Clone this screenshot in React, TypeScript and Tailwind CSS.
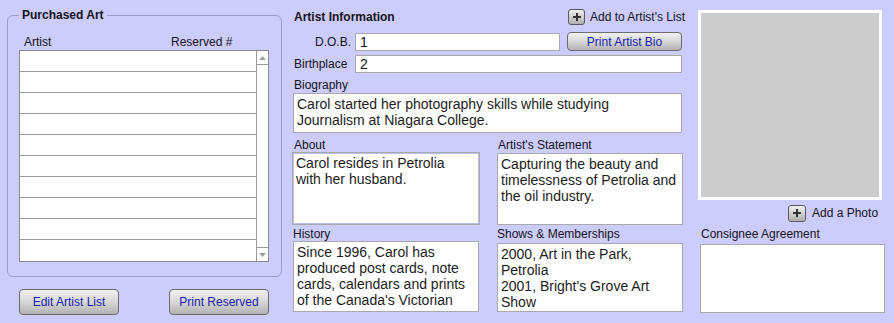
import React from 'react';

// --- small pieces ---
const GrayButton = ({ label, className = '' }: { label: string; className?: string }) => (
    <div
        className={`flex items-center justify-center rounded-[4px] border border-[#6b6b6b] bg-gradient-to-b from-[#f2f2f2] via-[#d6d6d6] to-[#b3b3b3] text-[12px] text-[#1b1bb0] ${className}`}
    >
        {label}
    </div>
);

const PlusButton = ({ size = 17 }: { size?: number }) => (
    <div
        className="flex items-center justify-center rounded-[3px] border border-[#5a5a5a] bg-gradient-to-b from-[#f0f0f0] to-[#b0b0b0]"
        style={{ width: size, height: size - 1 }}
    >
        <svg width="10" height="10" viewBox="0 0 10 10">
            <path d="M5 1V9M1 5H9" stroke="#333" strokeWidth="2" />
        </svg>
    </div>
);

const Box = ({ children, className = '' }: { children?: React.ReactNode; className?: string }) => (
    <div className={`bg-white border border-[#a9a9a9] pl-[3px] pt-[2px] text-[14px] leading-[16px] text-[#1c1c1c] overflow-hidden ${className}`}>
        {children}
    </div>
);

export default function App() {
    const rows = Array.from({ length: 10 });

    return (
        <div className="w-[894px] h-[323px] bg-[#ccccff] flex text-[12px] leading-[14px] text-[#141414] font-['Liberation_Sans',Arial,sans-serif] overflow-hidden">
            {/* Purchased Art */}
            <div className="ml-[7px] w-[275px] flex flex-col">
                <fieldset className="mt-[8px] h-[269px] border border-[#9c9cc0] rounded-[6px] px-[11px]">
                    <legend className="px-[3px] font-bold leading-[14px]">Purchased Art</legend>
                    <div className="mt-[13px] flex pl-[5px]">
                        <span className="w-[147px]">Artist</span>
                        <span>Reserved #</span>
                    </div>
                    <div className="mt-[1px] w-[250px] h-[212px] border border-[#8a8a8a] bg-white flex">
                        <div className="flex-1 flex flex-col">
                            {rows.map((_, i) => (
                                <div key={i} className={`h-[21px] ${i < 9 ? 'border-b border-[#9a9a9a]' : ''}`}></div>
                            ))}
                        </div>
                        <div className="w-[12px] border-l border-[#9a9a9a] flex flex-col justify-between">
                            <div className="h-[14px] border-b border-[#9a9a9a] flex items-center justify-center">
                                <svg width="7" height="4" viewBox="0 0 7 4"><path d="M0 4L3.5 0L7 4Z" fill="#a0a0a0" /></svg>
                            </div>
                            <div className="h-[14px] border-t border-[#9a9a9a] flex items-center justify-center">
                                <svg width="7" height="4" viewBox="0 0 7 4"><path d="M0 0L3.5 4L7 0Z" fill="#a0a0a0" /></svg>
                            </div>
                        </div>
                    </div>
                </fieldset>
                <div className="mt-[12px] flex gap-[50px] pl-[12px]">
                    <GrayButton label="Edit Artist List" className="w-[100px] h-[26px]" />
                    <GrayButton label="Print Reserved" className="w-[100px] h-[26px]" />
                </div>
            </div>

            {/* Artist Information */}
            <div className="ml-[10px] w-[394px] flex flex-col">
                <div className="mt-[8px] h-[18px] flex items-center">
                    <span className="pl-[2px] w-[276px] font-bold">Artist Information</span>
                    <PlusButton />
                    <span className="ml-[5px]">Add to Artist's List</span>
                </div>
                <div className="mt-[6px] h-[19px] flex items-center">
                    <span className="w-[59px] text-right">D.O.B.</span>
                    <div className="ml-[4px] w-[205px] h-[18px] bg-white border border-[#a9a9a9] pl-[4px] text-[14px] leading-[16px]">1</div>
                    <GrayButton label="Print Artist Bio" className="ml-[7px] w-[115px] h-[19px]" />
                </div>
                <div className="mt-[4px] h-[18px] flex items-center">
                    <span className="pl-[2px] w-[63px]">Birthplace</span>
                    <div className="w-[327px] h-[18px] bg-white border border-[#a9a9a9] pl-[4px] text-[14px] leading-[16px]">2</div>
                </div>
                <div className="mt-[5px] pl-[2px]">Biography</div>
                <Box className="mt-[1px] ml-[1px] w-[389px] h-[40px] pr-[40px]">
                    Carol started her photography skills while studying Journalism at Niagara College.
                </Box>
                <div className="mt-[5px] flex">
                    <div className="w-[188px] flex flex-col">
                        <div className="pl-[2px]">About</div>
                        <Box className="w-[188px] h-[73px] pr-[12px] border-[#8e9ae6] shadow-[inset_0_0_0_1px_#b9c0f0]">
                            Carol resides in Petrolia with her husband.
                        </Box>
                        <div className="mt-[2px] pl-[1px]">History</div>
                        <Box className="ml-[1px] w-[186px] h-[71px]">
                            Since 1996, Carol has produced post cards, note cards, calendars and prints of the Canada's Victorian
                        </Box>
                    </div>
                    <div className="ml-[17px] w-[186px] flex flex-col">
                        <div className="pl-[1px]">Artist's Statement</div>
                        <Box className="mt-[1px] w-[186px] h-[72px]">
                            Capturing the beauty and timelessness of Petrolia and the oil industry.
                        </Box>
                        <div className="mt-[2px]">Shows &amp; Memberships</div>
                        <Box className="mt-[2px] w-[186px] h-[69px]">
                            2000, Art in the Park, Petrolia
                            <br />
                            2001, Bright's Grove Art Show
                        </Box>
                    </div>
                </div>
            </div>

            {/* Photo */}
            <div className="ml-[12px] w-[188px] flex flex-col">
                <div className="mt-[10px] w-[184px] h-[190px] border-[3px] border-white bg-[#cccccc]"></div>
                <div className="mt-[4px] pl-[90px] flex items-center h-[18px]">
                    <PlusButton size={18} />
                    <span className="ml-[6px]">Add a Photo</span>
                </div>
                <div className="mt-[5px] pl-[3px]">Consignee Agreement</div>
                <div className="mt-[3px] ml-[2px] w-[185px] h-[69px] bg-white border border-[#a9a9a9]"></div>
            </div>
        </div>
    );
}
